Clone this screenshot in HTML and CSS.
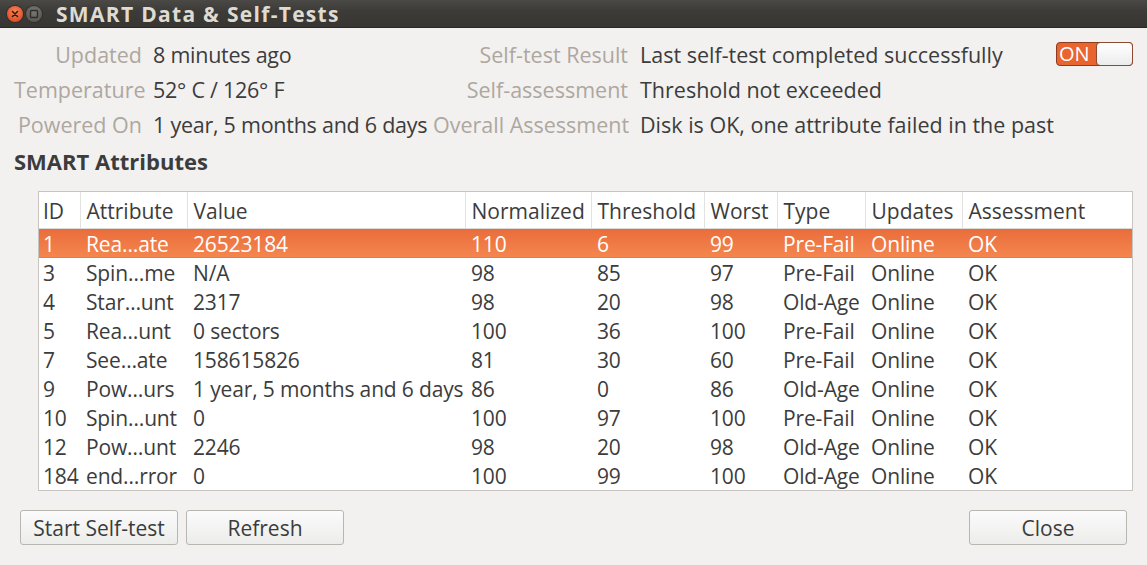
FILE: index.html
```html
<!DOCTYPE html>
<html>
<head>
<meta charset="utf-8">
<link rel="stylesheet" href="styles.css">
</head>
<body>
<div class="window">
  <div class="titlebar">
    <div class="wbtn close"><svg width="16" height="16" viewBox="0 0 16 16"><path d="M5.5 5.5 L10.5 10.5 M10.5 5.5 L5.5 10.5" stroke="#3a1a10" stroke-width="1.6" stroke-linecap="round"/></svg></div>
    <div class="wbtn mini"><svg width="16" height="16" viewBox="0 0 16 16"><rect x="4.5" y="4.5" width="7" height="7" rx="1" fill="none" stroke="#2e2d2a" stroke-width="1.4"/></svg></div>
    <div class="title">SMART Data &amp; Self-Tests</div>
  </div>
  <div class="content">
    <div class="info">
      <div class="lab l1">Updated</div><div class="val v1">8 minutes ago</div>
      <div class="lab l2">Self-test Result</div><div class="val v2">Last self-test completed successfully</div>
      <div class="toggle"><span class="on">ON</span><span class="knob"></span></div>
      <div class="lab l1">Temperature</div><div class="val v1">52° C / 126° F</div>
      <div class="lab l2">Self-assessment</div><div class="val v2">Threshold not exceeded</div>
      <div></div>
      <div class="lab l1">Powered On</div><div class="val v1">1 year, 5 months and 6 days</div>
      <div class="lab l2">Overall Assessment</div><div class="val v2">Disk is OK, one attribute failed in the past</div>
      <div></div>
    </div>
    <div class="section">SMART Attributes</div>
    <div class="frame">
      <table class="attrs">
        <colgroup>
          <col class="c-id"><col class="c-attr"><col class="c-val"><col class="c-norm"><col class="c-thr"><col class="c-worst"><col class="c-type"><col class="c-upd"><col class="c-ass">
        </colgroup>
        <thead>
          <tr><th>ID</th><th>Attribute</th><th>Value</th><th>Normalized</th><th>Threshold</th><th>Worst</th><th>Type</th><th>Updates</th><th class="last">Assessment</th></tr>
        </thead>
        <tbody>
          <tr class="sel"><td>1</td><td>Rea…ate</td><td>26523184</td><td>110</td><td>6</td><td>99</td><td>Pre-Fail</td><td>Online</td><td>OK</td></tr>
          <tr><td>3</td><td>Spin…me</td><td>N/A</td><td>98</td><td>85</td><td>97</td><td>Pre-Fail</td><td>Online</td><td>OK</td></tr>
          <tr><td>4</td><td>Star…unt</td><td>2317</td><td>98</td><td>20</td><td>98</td><td>Old-Age</td><td>Online</td><td>OK</td></tr>
          <tr><td>5</td><td>Rea…unt</td><td>0 sectors</td><td>100</td><td>36</td><td>100</td><td>Pre-Fail</td><td>Online</td><td>OK</td></tr>
          <tr><td>7</td><td>See…ate</td><td>158615826</td><td>81</td><td>30</td><td>60</td><td>Pre-Fail</td><td>Online</td><td>OK</td></tr>
          <tr><td>9</td><td>Pow…urs</td><td>1 year, 5 months and 6 days</td><td>86</td><td>0</td><td>86</td><td>Old-Age</td><td>Online</td><td>OK</td></tr>
          <tr><td>10</td><td>Spin…unt</td><td>0</td><td>100</td><td>97</td><td>100</td><td>Pre-Fail</td><td>Online</td><td>OK</td></tr>
          <tr><td>12</td><td>Pow…unt</td><td>2246</td><td>98</td><td>20</td><td>98</td><td>Old-Age</td><td>Online</td><td>OK</td></tr>
          <tr><td>184</td><td>end…rror</td><td>0</td><td>100</td><td>99</td><td>100</td><td>Old-Age</td><td>Online</td><td>OK</td></tr>
        </tbody>
      </table>
    </div>
    <div class="buttons">
      <button class="btn">Start Self-test</button>
      <button class="btn">Refresh</button>
      <div class="spacer"></div>
      <button class="btn">Close</button>
    </div>
  </div>
</div>
</body>
</html>
```
FILE: styles.css
```css
* { box-sizing: border-box; }
html, body { margin: 0; padding: 0; }
body {
  width: 1147px;
  height: 565px;
  overflow: hidden;
  background: #f2f1f0;
  font-family: "Open Sans", "Noto Sans", sans-serif;
  font-size: 21.5px;
  color: #3c3c3c;
}
.window { width: 1147px; height: 565px; display: flex; flex-direction: column; }
.titlebar {
  height: 28px;
  flex: none;
  display: flex;
  align-items: center;
  background: linear-gradient(#4a4945, #3c3b37 40%, #373632);
  box-shadow: inset 0 -1px 0 #2a2926;
  padding-left: 7px;
}
.wbtn {
  width: 16px; height: 16px; border-radius: 50%;
  display: flex; align-items: center; justify-content: center;
  margin-right: 3px;
}
.wbtn.close { background: radial-gradient(circle at 50% 35%, #f58558, #e2522a 70%, #c4421f); box-shadow: 0 0 0 1px #2f2e2b; }
.wbtn.mini { background: radial-gradient(circle at 50% 35%, #7a7974, #5a5954 70%, #4b4a46); box-shadow: 0 0 0 1px #2f2e2b; }
.title {
  margin-left: 11px;
  color: #dfdbd2;
  font-weight: bold;
  font-size: 21px;
  letter-spacing: 1.3px;
  line-height: 28px;
  white-space: nowrap;
}
.content { flex: 1; display: flex; flex-direction: column; padding: 9px 14px 0 14px; }
.info {
  display: grid;
  grid-template-columns: 128px 291px 195px 1fr 77px;
  grid-auto-rows: 35px;
  align-items: center;
}
.lab { color: #aea79f; text-align: right; white-space: nowrap; line-height: 35px; }
.val { white-space: nowrap; padding-left: 11px; line-height: 35px; }
.v1 { letter-spacing: -0.25px; }
.v2 { padding-left: 12px; }
.toggle {
  width: 77px; height: 24px;
  border: 1px solid #8c3b1d;
  border-radius: 4px;
  background: #e9652f;
  display: flex; align-items: center;
  margin-right: 1px;
  margin-top: -2px;
}
.toggle .on { color: #fff; flex: 1; padding-left: 2px; font-size: 20px; line-height: 22px; white-space: nowrap; }
.toggle .knob {
  flex: none;
  width: 37px; height: 24px; margin: -1px -1px -1px 0;
  background: linear-gradient(#ffffff, #ececec);
  border: 1px solid #8c4a30;
  border-radius: 4px;
}
.section { font-weight: bold; font-size: 22px; height: 37px; line-height: 39px; }
.frame {
  margin: 12px 0 0 24px;
  height: 300px;
  background: #fff;
  border: 1px solid #c8c4c0;
  overflow: hidden;
  font-size: 21px;
}
.attrs { border-collapse: collapse; table-layout: fixed; width: 100%; }
.c-id { width: 41px; } .c-attr { width: 107px; } .c-val { width: 278px; }
.c-norm { width: 126px; } .c-thr { width: 113px; } .c-worst { width: 73px; }
.c-type { width: 88px; } .c-upd { width: 97px; } .c-ass { width: auto; }
.attrs th {
  font-weight: normal; text-align: left; height: 36px; padding: 2px 0 0 6px;
  border-right: 1px solid #e4e2e0; border-bottom: 1px solid #dcdad7;
  white-space: nowrap; overflow: hidden;
}
.attrs th:first-child { padding-left: 4px; }
.attrs th.last { border-right: none; }
.attrs td { height: 29px; padding: 2px 0 0 6px; white-space: nowrap; overflow: hidden; line-height: 27px; letter-spacing: -0.15px; }
.attrs td:first-child { padding-left: 4px; }
.attrs tr.sel td { background: linear-gradient(#e96c3b, #f4864f); color: #fff; }
.buttons { display: flex; gap: 8px; margin-top: 19px; padding: 0 6px; }
.spacer { flex: 1; }
.btn {
  width: 158px; height: 35px;
  font-family: inherit; font-size: 21px; color: #3c3c3c;
  background: linear-gradient(#fbfbfb, #ececeb);
  border: 1px solid #b9b6b2;
  border-radius: 3px;
  padding: 0;
  line-height: 32px;
}
```
